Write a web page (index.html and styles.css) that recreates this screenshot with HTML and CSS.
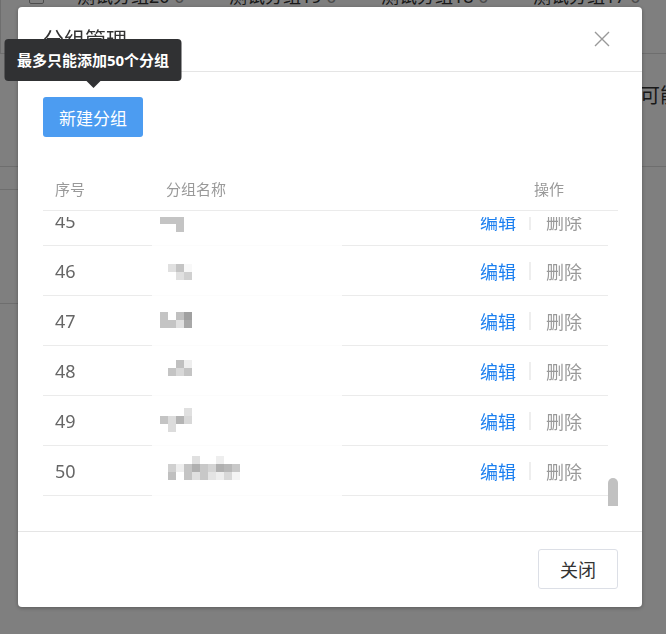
FILE: index.html
```html
<!DOCTYPE html>
<html lang="zh-CN">
<head>
  <meta charset="UTF-8">
  <title>分组管理</title>
  <link rel="stylesheet" href="styles.css">
</head>
<body>

  <div class="page">
    <div class="bg-bar">
      <div class="bg-side"></div>
      <div class="bg-tabs">
        <span class="bg-check"></span>
        <span class="bg-tab">测试分组20 <em>0</em></span>
        <span class="bg-tab">测试分组19 <em>0</em></span>
        <span class="bg-tab">测试分组18 <em>0</em></span>
        <span class="bg-tab">测试分组17 <em>0</em></span>
      </div>
    </div>
    <div class="bg-mid">
      <span class="bg-more">可能</span>
    </div>
    <div class="bg-list">
      <div class="bg-row short"></div>
      <div class="bg-row"></div>
    </div>
  </div>

  <div class="mask">
    <div class="dialog">
      <div class="dialog-header">
        <span class="dialog-title">分组管理</span>
        <svg class="dialog-close" width="16" height="16" viewBox="0 0 16 16">
          <path d="M1 1 L15 15 M15 1 L1 15" stroke="#999" stroke-width="1.4" fill="none"/>
        </svg>
      </div>

      <div class="dialog-body">
        <div class="add-wrap">
          <button class="btn-primary">新建分组</button>
          <div class="tooltip">最多只能添加50个分组</div>
        </div>

        <div class="table">
          <div class="table-head">
            <div class="th th-num">序号</div>
            <div class="th th-name">分组名称</div>
            <div class="th th-op">操作</div>
          </div>
          <div class="table-scroll">
            <div id="tbody" class="table-body"></div>
            <div class="scrollbar"><div class="scrollbar-thumb"></div></div>
          </div>
        </div>
      </div>

      <div class="dialog-footer">
        <button class="btn-default">关闭</button>
      </div>
    </div>
  </div>

  <script>
    // blurred group names: [x, y, colour] blocks of 8px
    const mosaics = {
      45: [[8,20,'#c4c4c4'],[16,20,'#c4c4c4'],[24,20,'#c4c4c4'],[24,28,'#c4c4c4']],
      46: [[16,18,'#e0e0e0'],[24,18,'#c4c4c4'],[32,18,'#f8f8f8'],[24,26,'#e0e0e0'],[32,26,'#d0d0d0']],
      47: [[8,16,'#c4c4c4'],[8,24,'#c4c4c4'],[16,24,'#c4c4c4'],[24,16,'#c0c0c0'],[24,24,'#e0e0e0'],[32,16,'#a0a0a0'],[32,24,'#a8a8a8']],
      48: [[24,14,'#c0c0c0'],[32,14,'#eeeeee'],[16,22,'#c4c4c4'],[24,22,'#d8d8d8'],[32,22,'#c4c4c4']],
      49: [[32,12,'#e0e0e0'],[8,20,'#c4c4c4'],[16,20,'#dcdcdc'],[24,20,'#b4b4b4'],[32,20,'#d8d8d8'],[16,28,'#dcdcdc']],
      50: [[40,10,'#e0e0e0'],[64,10,'#eeeeee'],
           [16,18,'#d0d0d0'],[24,18,'#eeeeee'],[32,18,'#c4c4c4'],[40,18,'#b0b0b0'],[48,18,'#c8c8c8'],[56,18,'#d4d4d4'],[64,18,'#b0b0b0'],[72,18,'#b8b8b8'],[80,18,'#c8c8c8'],
           [16,26,'#c0c0c0'],[32,26,'#c4c4c4'],[40,26,'#e0e0e0'],[48,26,'#c8c8c8'],[56,26,'#e4e4e4'],[64,26,'#eeeeee'],[72,26,'#d8d8d8'],[80,26,'#f4f4f4']]
    };
    const fallback = [[16,18,'#d0d0d0'],[24,18,'#c4c4c4'],[32,18,'#e0e0e0'],[24,26,'#d8d8d8']];

    const tbody = document.getElementById('tbody');
    let html = '';
    for (let i = 1; i <= 50; i++) {
      const blocks = (mosaics[i] || fallback)
        .map(b => `<rect x="${b[0]}" y="${b[1]}" width="8" height="8" fill="${b[2]}"/>`)
        .join('');
      html += `
        <div class="tr">
          <div class="td td-num">${i}</div>
          <div class="td td-name"><svg width="190" height="49" shape-rendering="crispEdges">${blocks}</svg></div>
          <div class="td"></div>
          <div class="td td-op">
            <a class="link-edit">编辑</a>
            <span class="sep"></span>
            <a class="link-del">删除</a>
          </div>
        </div>`;
    }
    html += '<div class="tail"></div>';
    tbody.innerHTML = html;
    tbody.scrollTop = tbody.scrollHeight;
  </script>

</body>
</html>
```

FILE: styles.css
```css
* {
  box-sizing: border-box;
}

body {
  margin: 0;
  padding: 0;
  font-family: "Noto Sans", "Noto Sans CJK SC", sans-serif;
  background: #fff;
  color: #333;
  overflow: hidden;
}

/* page under the mask */
.page {
  height: 634px;
}

.bg-bar {
  display: flex;
  height: 54px;
  border-bottom: 1px solid #ddd;
}

.bg-side {
  width: 41px;
  border-right: 1px solid #ddd;
}

.bg-tabs {
  display: flex;
  align-items: center;
  margin-top: -19px;
  height: 30px;
}

.bg-check {
  width: 15px;
  height: 15px;
  border: 1px solid #999;
  border-radius: 2px;
  margin-left: 28px;
  margin-right: 33px;
}

.bg-tab {
  width: 152px;
  font-size: 18px;
  line-height: 24px;
  color: #333;
  white-space: nowrap;
}

.bg-tab em {
  font-style: normal;
  color: #999;
}

.bg-mid {
  display: flex;
  justify-content: flex-end;
  height: 113px;
  padding-top: 28px;
  border-bottom: 1px solid #ddd;
}

.bg-more {
  font-size: 20px;
  line-height: 28px;
  margin-right: -14px;
  color: #333;
}

.bg-list {
  width: 300px;
}

.bg-row {
  height: 114px;
  border-bottom: 1px solid #ddd;
}

.bg-row.short {
  height: 23px;
}

/* dialog */
.mask {
  position: fixed;
  inset: 0;
  background: rgba(0, 0, 0, 0.5);
}

.dialog {
  width: 624px;
  margin: 7px 0 0 18px;
  background: #fff;
  border-radius: 4px;
  box-shadow: 0 1px 4px rgba(0, 0, 0, 0.3);
}

.dialog-header {
  display: flex;
  align-items: center;
  justify-content: space-between;
  height: 65px;
  padding: 0 32px 0 25px;
  border-bottom: 1px solid #e5e5e5;
}

.dialog-title {
  font-size: 21px;
  line-height: 28px;
  color: #333;
}

.dialog-close {
  cursor: pointer;
}

.dialog-body {
  padding: 25px;
}

.add-wrap {
  position: relative;
  width: 100px;
}

.btn-primary {
  width: 100px;
  height: 40px;
  border: none;
  border-radius: 3px;
  background: #4c9cf1;
  color: #fff;
  font-family: inherit;
  font-size: 17px;
  cursor: pointer;
}

.tooltip {
  position: absolute;
  left: 50%;
  bottom: calc(100% + 16px);
  transform: translateX(-50%);
  width: 177px;
  height: 42px;
  line-height: 42px;
  text-align: center;
  white-space: nowrap;
  background: #303133;
  color: #fff;
  font-size: 15px;
  font-weight: 700;
  border-radius: 4px;
}

.tooltip::after {
  content: "";
  position: absolute;
  left: 50%;
  top: 100%;
  margin-left: -7px;
  border: 7px solid transparent;
  border-top-color: #303133;
  border-bottom: 0;
}

.table {
  margin-top: 30px;
  width: 575px;
}

.table-head {
  display: grid;
  grid-template-columns: 109px 1fr 150px;
  height: 44px;
  border-bottom: 1px solid #ebebeb;
}

.th {
  display: flex;
  align-items: center;
  font-size: 15px;
  color: #999;
}

.th-num {
  padding-left: 12px;
}

.th-name {
  padding-left: 14px;
}

.th-op {
  padding-left: 66px;
}

.table-scroll {
  display: flex;
  height: 289px;
  margin-top: 6px;
}

.table-body {
  width: 565px;
  overflow: hidden;
}

.tail {
  height: 10px;
}

.scrollbar {
  width: 10px;
  display: flex;
  flex-direction: column;
  justify-content: flex-end;
}

.scrollbar-thumb {
  height: 28px;
  background: #c1c1c1;
  border-radius: 5px 5px 0 0;
}

.tr {
  display: grid;
  grid-template-columns: 109px 190px 1fr 140px;
  height: 50px;
}

.td {
  display: flex;
  align-items: center;
  border-bottom: 1px solid #ebebeb;
}

.td-num {
  padding-left: 12px;
  font-size: 18px;
  color: #666;
}

.td-name {
  border-bottom-color: #fcfcfc;
}

.td-name svg {
  display: block;
}

.td-op {
  padding-left: 12px;
  font-size: 18px;
}

.link-edit {
  color: #1a7ff0;
  cursor: pointer;
}

.sep {
  width: 2px;
  height: 18px;
  margin: 0 15px 0 13px;
  background: #eeeeee;
}

.link-del {
  color: #999;
  cursor: pointer;
}

.dialog-footer {
  display: flex;
  justify-content: flex-end;
  padding: 17px 24px 18px;
  border-top: 1px solid #e5e5e5;
}

.btn-default {
  width: 80px;
  height: 40px;
  border: 1px solid #dcdfe6;
  border-radius: 3px;
  background: #fff;
  color: #333;
  font-family: inherit;
  font-size: 18px;
  cursor: pointer;
}
```
